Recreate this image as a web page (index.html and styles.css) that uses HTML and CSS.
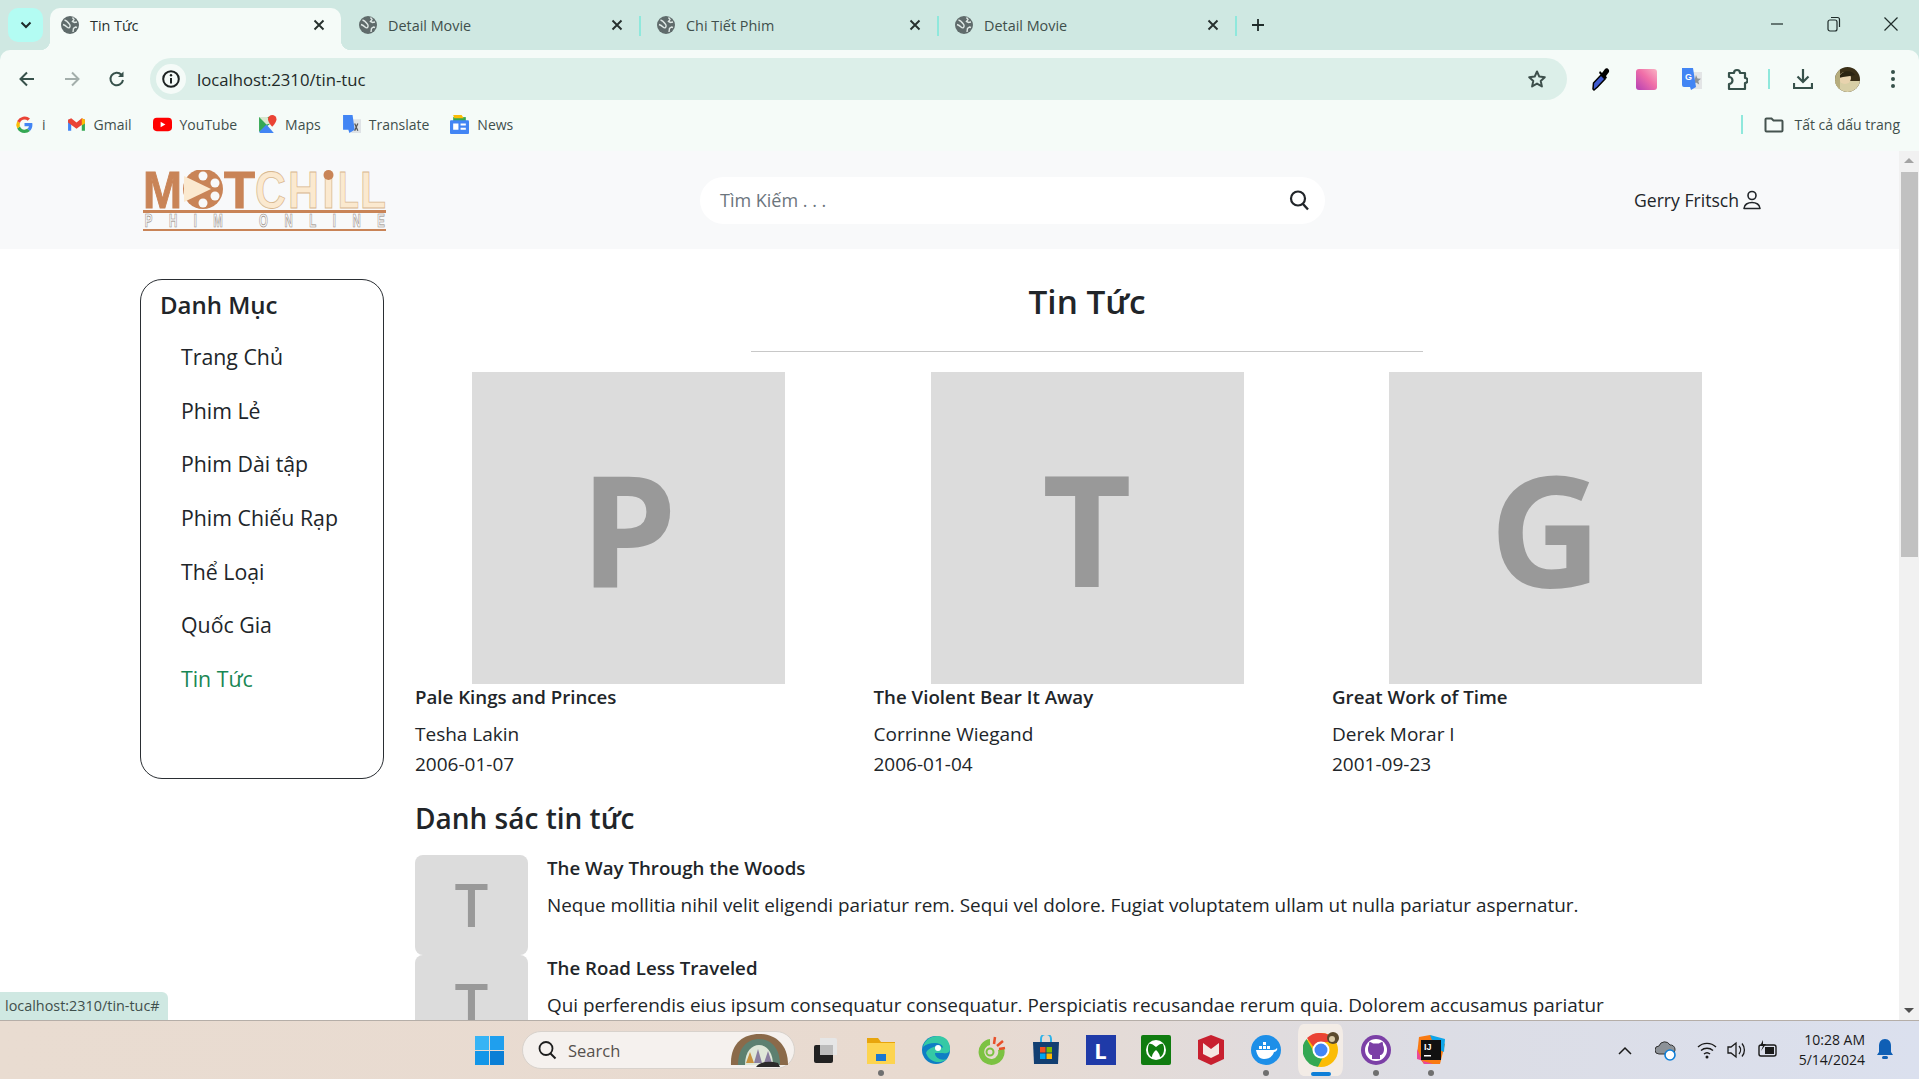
FILE: index.html
```html
<!DOCTYPE html>
<html lang="vi">
<head>
  <meta charset="UTF-8">
  <meta name="viewport" content="width=device-width, initial-scale=1.0">
  <title>Tin Tức</title>
  <link rel="stylesheet" href="styles.css">
</head>
<body>
  <svg class="defs" width="0" height="0" aria-hidden="true">
    <symbol id="globe" viewBox="0 0 18 18">
      <circle cx="9" cy="9" r="9" fill="#5f6b6b"/>
      <path d="M3.500 4c2 .5 3 1.500 4 3s2 1.500 1.500 3.500-2 1.500-3 .5-2.500-2-4-2.500M11.500 1.500l1.500 2-1.500 2 2 1 2.500-.5M12 16l.5-3.500 2-1.500 1.500.5" fill="none" stroke="#dfe8e5" stroke-width="1.400"/>
    </symbol>
    <symbol id="close-x" viewBox="0 0 12 12">
      <path d="m1.500 1.500 9 9M10.500 1.500l-9 9" stroke="#26302e" stroke-width="1.900"/>
    </symbol>
  </svg>

  <div class="tabstrip">
    <button class="tab-menu"><svg width="12" height="8" viewBox="0 0 12 8"><path d="M1.500 1.500 6 6l4.500-4.500" fill="none" stroke="#1d2a28" stroke-width="2"/></svg></button>
    <div class="tab tab-active"><svg class="favicon"><use href="#globe"/></svg><span class="tab-title">Tin Tức</span><svg class="tab-close"><use href="#close-x"/></svg></div>
    <div class="tab tab-sep"><svg class="favicon"><use href="#globe"/></svg><span class="tab-title">Detail Movie</span><svg class="tab-close"><use href="#close-x"/></svg></div>
    <div class="tab tab-sep"><svg class="favicon"><use href="#globe"/></svg><span class="tab-title">Chi Tiết Phim</span><svg class="tab-close"><use href="#close-x"/></svg></div>
    <div class="tab tab-sep"><svg class="favicon"><use href="#globe"/></svg><span class="tab-title">Detail Movie</span><svg class="tab-close"><use href="#close-x"/></svg></div>
    <svg class="tab-plus" width="14" height="14" viewBox="0 0 14 14"><path d="M7 1v12M1 7h12" stroke="#1f2c2a" stroke-width="1.800"/></svg>
    <div class="window-controls">
      <span class="win-btn"><svg width="14" height="14" viewBox="0 0 14 14"><path d="M1 7h12" stroke="#1f2c2a" stroke-width="1.200"/></svg></span>
      <span class="win-btn"><svg width="14" height="16" viewBox="0 0 14 16"><rect x="1" y="4" width="9" height="11" rx="2" fill="none" stroke="#1f2c2a" stroke-width="1.200"/><path d="M4 1.500h6.500a2 2 0 0 1 2 2V11" fill="none" stroke="#1f2c2a" stroke-width="1.200"/></svg></span>
      <span class="win-btn"><svg width="14" height="14" viewBox="0 0 14 14"><path d="M.5.500l13 13M13.500.500l-13 13" stroke="#1f2c2a" stroke-width="1.200"/></svg></span>
    </div>
  </div>

  <div class="toolbar">
    <span class="tool"><svg width="18" height="18" viewBox="0 0 18 18"><path d="M16 9H3M9 2.500 2.500 9 9 15.500" fill="none" stroke="#37514b" stroke-width="2"/></svg></span>
    <span class="tool"><svg width="18" height="18" viewBox="0 0 18 18"><path d="M2 9h13M9 2.500 15.500 9 9 15.500" fill="none" stroke="#a3aeab" stroke-width="2"/></svg></span>
    <span class="tool"><svg width="18" height="18" viewBox="0 0 18 18"><path d="M15 10a6.300 6.300 0 1 1-1.600-5.300" fill="none" stroke="#37514b" stroke-width="2"/><path d="M15.500 1.500v5.500H10z" fill="#37514b"/></svg></span>
    <div class="omnibox">
      <span class="site-info"><svg width="18" height="18" viewBox="0 0 18 18"><circle cx="9" cy="9" r="7.800" fill="none" stroke="#1d2322" stroke-width="2"/><path d="M9 8v5.500" stroke="#1d2322" stroke-width="2"/><circle cx="9" cy="5.200" r="1.200" fill="#1d2322"/></svg></span>
      <span class="url">localhost:2310/tin-tuc</span>
      <svg class="star" width="20" height="20" viewBox="0 0 20 20"><path d="m10 2.500 2.300 5.100 5.500.6-4.100 3.700 1.200 5.500L10 14.600l-4.900 2.800 1.200-5.500-4.100-3.700 5.500-.6z" fill="none" stroke="#3d4f4b" stroke-width="2" stroke-linejoin="round"/></svg>
    </div>
    <span class="tool"><svg width="20" height="24" viewBox="0 0 20 24"><path d="m2 23-1-1 .5-6L9 8l4 4-7.500 8z" fill="#3f5bd0" stroke="#000" stroke-width="1.500"/><path d="m10 6 3-4c2-2 5 1 4 3l-3 4 1 2-2 1-6-6 1-2z" fill="#000"/></svg></span>
    <span class="tool"><span class="ext-gradient"></span></span>
    <span class="tool"><svg width="22" height="24" viewBox="0 0 22 24"><path d="M9 5h12v17H12z" fill="#e3e5e6"/><path d="m15 8 1.500 3.500 3.500.3-2.700 2.200.9 3.500-3.200-2-2.500 1.500z" fill="#8d9296"/><path d="M1 1h11l3 19-5 3-1-3H3a2 2 0 0 1-2-2z" fill="#4285f4"/><text x="4" y="13" class="ext-g">G</text></svg></span>
    <span class="tool"><svg width="22" height="24" viewBox="0 0 22 24"><path d="M3 6h5a3 3 0 0 1 6 0h5v5a2.500 2.500 0 0 1 0 5v6H3v-5a3 3 0 0 0 0-7z" fill="none" stroke="#37514b" stroke-width="2.200" stroke-linejoin="round"/></svg></span>
    <span class="tool-sep"></span>
    <span class="tool"><svg width="20" height="22" viewBox="0 0 20 22"><path d="M10 1v12M4.500 8.500 10 14l5.500-5.500M1 15v5h18v-5" fill="none" stroke="#37514b" stroke-width="2.200"/></svg></span>
    <span class="tool"><svg width="25" height="25" viewBox="0 0 25 25"><defs><clipPath id="av"><circle cx="12.500" cy="12.500" r="12.500"/></clipPath></defs><g clip-path="url(#av)"><rect width="25" height="25" fill="#3b3018"/><rect y="14" width="25" height="11" fill="#d8cfa6"/><circle cx="10" cy="11" r="6" fill="#e8d3ae"/><path d="M4 11c1-8 13-9 16-3l-5 1-7 1z" fill="#2b2412"/><rect x="0" y="0" width="5" height="25" fill="#b6ad7d"/></g></svg></span>
    <span class="tool"><svg width="6" height="20" viewBox="0 0 6 20"><circle cx="3" cy="3" r="2" fill="#37514b"/><circle cx="3" cy="10" r="2" fill="#37514b"/><circle cx="3" cy="17" r="2" fill="#37514b"/></svg></span>
  </div>

  <div class="bookmarks">
    <span class="mark"><svg class="mark-icon" viewBox="0 0 18 18"><path d="M16.500 9.200c0-.6 0-1.200-.2-1.700H9v3.200h4.200a3.600 3.600 0 0 1-1.600 2.400l2.500 2c1.500-1.400 2.400-3.400 2.400-5.900z" fill="#4285f4"/><path d="M9 17c2.100 0 3.900-.7 5.100-1.900l-2.500-2c-.7.500-1.500.8-2.600.8a4.600 4.600 0 0 1-4.300-3.200L2.100 12.700A8 8 0 0 0 9 17z" fill="#34a853"/><path d="M4.700 10.700a4.700 4.700 0 0 1 0-3L2.100 5.600a8 8 0 0 0 0 7.100z" fill="#fbbc05"/><path d="M9 4.200c1.200 0 2.200.4 3 1.200l2.200-2.200A8 8 0 0 0 2.100 5.600l2.600 2A4.600 4.600 0 0 1 9 4.200z" fill="#ea4335"/></svg>i</span>
    <span class="mark"><svg class="mark-icon" viewBox="0 0 18 18"><path d="M1 4v11h3V8z" fill="#4285f4"/><path d="M17 4v11h-3V8z" fill="#34a853"/><path d="M1 4.500 4 3l5 4 5-4 3 1.500V7l-8 6-8-6z" fill="#ea4335"/><path d="M14 3l3 1.500V8l-3 2z" fill="#fbbc05"/></svg>Gmail</span>
    <span class="mark"><svg class="mark-icon" viewBox="0 0 20 18"><rect y="2" width="20" height="14" rx="4" fill="#f00"/><path d="m8 6 5 3-5 3z" fill="#fff"/></svg>YouTube</span>
    <span class="mark"><svg class="mark-icon" viewBox="0 0 18 18"><path d="M1 2h11v6L1 16z" fill="#34a853"/><path d="M1 16 8 9l7 8H2z" fill="#4285f4"/><path d="M12 8 8 9 1 2h8z" fill="#d8e8d0"/><path d="M13.500 0a4 4 0 0 1 4 4c0 3-4 7-4 7s-4-4-4-7a4 4 0 0 1 4-4z" fill="#ea4335"/></svg>Maps</span>
    <span class="mark"><svg class="mark-icon" viewBox="0 0 18 18"><path d="M6 4h12v13H9z" fill="#dfe3e6"/><path d="M1 0h9l2 14-5 3-1-3H1z" fill="#4285f4"/><path d="m12 8 3 7M15 8l-3 7" stroke="#555" stroke-width="1.200"/></svg>Translate</span>
    <span class="mark"><svg class="mark-icon" viewBox="0 0 18 18"><path d="M3 2h12v5H3z" fill="#34a853"/><path d="M3 0h8l2 3H4z" fill="#fbbc05"/><rect x="0" y="5" width="18" height="13" rx="1" fill="#4285f4"/><path d="M3 8h5v6H3zM10 8h5v2h-5zM10 12h5v2h-5z" fill="#fff"/></svg>News</span>
    <span class="marks-all"><span class="marks-sep"></span><svg width="20" height="16" viewBox="0 0 20 16"><path d="M1.500 2.500a1 1 0 0 1 1-1h5l2 2h8a1 1 0 0 1 1 1v9a1 1 0 0 1-1 1h-15a1 1 0 0 1-1-1z" fill="none" stroke="#45534f" stroke-width="2"/></svg><span>Tất cả dấu trang</span></span>
  </div>

  <div class="viewport">
    <div class="page">
      <header class="site-header">
        <svg class="logo" width="243" height="61" viewBox="0 0 243 61">
          <text class="logo-big logo-brown" x="0" y="38" textLength="39" lengthAdjust="spacingAndGlyphs">M</text>
          <circle cx="60" cy="19" r="20" fill="#c98457"/>
          <circle cx="60" cy="6" r="4.500" fill="#f8f9fa"/><circle cx="72" cy="13" r="4.500" fill="#f8f9fa"/><circle cx="72" cy="26" r="4.500" fill="#f8f9fa"/><circle cx="60" cy="33" r="4.500" fill="#f8f9fa"/>
          <path d="m41 6 27 13-27 13z" fill="#fbe9cf"/>
          <text class="logo-big logo-brown" x="81" y="38" textLength="31" lengthAdjust="spacingAndGlyphs">T</text>
          <text class="logo-big logo-cream" x="112" y="38" textLength="31" lengthAdjust="spacingAndGlyphs">C</text>
          <text class="logo-big logo-cream" x="145" y="38" textLength="31" lengthAdjust="spacingAndGlyphs">H</text>
          <text class="logo-big logo-cream" x="179" y="38" textLength="13" lengthAdjust="spacingAndGlyphs">I</text>
          <circle cx="185.500" cy="5" r="5" fill="#c98457"/>
          <text class="logo-big logo-cream" x="195" y="38" textLength="21" lengthAdjust="spacingAndGlyphs">L</text>
          <text class="logo-big logo-cream" x="217" y="38" textLength="26" lengthAdjust="spacingAndGlyphs">L</text>
          <rect y="40" width="243" height="3" fill="#c98457"/>
          <text class="logo-small" transform="scale(.6 1)" x="3" y="57.500" textLength="400">PHIM ONLINE</text>
          <rect y="59" width="243" height="2.500" fill="#c98457"/>
        </svg>
        <div class="search-box">
          <span class="search-hint">Tìm Kiếm . . .</span>
          <svg width="22" height="22" viewBox="0 0 22 22"><circle cx="10" cy="9.500" r="7" fill="none" stroke="#212529" stroke-width="2.200"/><path d="m15 15 5 5.500" stroke="#212529" stroke-width="2.400"/></svg>
        </div>
        <a class="user-link" href="#">Gerry Fritsch
          <svg width="18" height="20" viewBox="0 0 18 20"><circle cx="9" cy="5.500" r="4" fill="none" stroke="#212529" stroke-width="1.600"/><path d="M1 18.500c0-8 16-8 16 0z" fill="none" stroke="#212529" stroke-width="1.600" stroke-linejoin="round"/></svg>
        </a>
      </header>

      <div class="layout">
        <aside class="sidebar">
          <h4 class="sidebar-title">Danh Mục</h4>
          <ul class="sidebar-menu">
            <li>Trang Chủ</li>
            <li>Phim Lẻ</li>
            <li>Phim Dài tập</li>
            <li>Phim Chiếu Rạp</li>
            <li>Thể Loại</li>
            <li>Quốc Gia</li>
            <li class="active">Tin Tức</li>
          </ul>
        </aside>

        <main class="content">
          <h2 class="page-title">Tin Tức</h2>
          <hr class="page-rule">
          <div class="featured">
            <article class="card">
              <div class="card-img">P</div>
              <h6 class="card-title">Pale Kings and Princes</h6>
              <p class="card-line">Tesha Lakin</p>
              <p class="card-line">2006-01-07</p>
            </article>
            <article class="card">
              <div class="card-img">T</div>
              <h6 class="card-title">The Violent Bear It Away</h6>
              <p class="card-line">Corrinne Wiegand</p>
              <p class="card-line">2006-01-04</p>
            </article>
            <article class="card">
              <div class="card-img">G</div>
              <h6 class="card-title">Great Work of Time</h6>
              <p class="card-line">Derek Morar I</p>
              <p class="card-line">2001-09-23</p>
            </article>
          </div>

          <h3 class="list-title">Danh sác tin tức</h3>
          <div class="news-row">
            <div class="news-thumb">T</div>
            <div class="news-body">
              <h6 class="news-title">The Way Through the Woods</h6>
              <p class="news-text">Neque mollitia nihil velit eligendi pariatur rem. Sequi vel dolore. Fugiat voluptatem ullam ut nulla pariatur aspernatur.</p>
            </div>
          </div>
          <div class="news-row">
            <div class="news-thumb">T</div>
            <div class="news-body">
              <h6 class="news-title">The Road Less Traveled</h6>
              <p class="news-text">Qui perferendis eius ipsum consequatur consequatur. Perspiciatis recusandae rerum quia. Dolorem accusamus pariatur</p>
            </div>
          </div>
        </main>
      </div>
    </div>

    <div class="scrollbar">
      <span class="arrow-up"></span>
      <span class="thumb"></span>
      <span class="arrow-down"></span>
    </div>
    <div class="status-bubble">localhost:2310/tin-tuc#</div>
  </div>

  <footer class="taskbar">
    <svg class="win-logo" width="29" height="29" viewBox="0 0 29 29"><rect width="14" height="14" fill="#36b4f5"/><rect x="15" width="14" height="14" fill="#1f9fee"/><rect y="15" width="14" height="14" fill="#1296e8"/><rect x="15" y="15" width="14" height="14" fill="#0a7fd6"/></svg>
    <div class="task-search">
      <svg width="20" height="20" viewBox="0 0 20 20"><circle cx="9" cy="8.500" r="6.500" fill="none" stroke="#1d1d1d" stroke-width="1.800"/><path d="m13.500 13.500 5 5" stroke="#1d1d1d" stroke-width="2"/></svg>
      <span class="task-search-text">Search</span>
      <svg class="task-search-pic" width="62" height="34" viewBox="0 0 62 34"><path d="M3 32C2 10 16 1 31 1s29 9 29 31z" fill="#8a6a4a"/><path d="M10 32C10 14 20 6 31 6s21 8 21 26z" fill="#5d8070"/><path d="M17 32C17 18 24 12 31 12s14 6 14 20z" fill="#dfe7d8"/><path d="m26 30 4-14 4 14zM36 30l4-12 4 12z" fill="#8a7fa0"/><path d="m18 30 4-11 4 11z" fill="#c8923e"/><path d="M28 34c4-6 14-6 22-4l2 4z" fill="#2a2a2a"/></svg>
    </div>
    <span class="task-icon"><svg class="app" viewBox="0 0 30 30"><path d="M9 3h15a2 2 0 0 1 2 2v15H9z" fill="#e6e6e6"/><rect x="3" y="10" width="19" height="18" rx="2" fill="#222"/><rect x="9" y="10" width="13" height="10" fill="#bcbcbc"/></svg></span>
    <span class="task-icon running"><svg class="app" viewBox="0 0 30 30"><path d="M1 3h11l3 4h14v22H1z" fill="#e8a50c"/><path d="M1 8h28v21H1z" fill="#fdd44f"/><rect x="10" y="19" width="10" height="7" fill="#1a77d2"/></svg></span>
    <span class="task-icon"><svg class="app" viewBox="0 0 30 30"><circle cx="15" cy="15" r="14" fill="#0e7ec4"/><path d="M2 12C4 3 14-1 22 2c5 2 7 7 7 12 0 4-4 5-7 4h-8c0 5 6 8 12 6-7 6-18 3-21-6 2-5 12-9 17-5 0-6-14-7-20-1z" fill="#35c9a5"/><circle cx="17" cy="13" r="3" fill="#fff"/></svg></span>
    <span class="task-icon"><svg class="app" viewBox="0 0 30 30"><path d="M14 4a13 13 0 1 0 14 9l-6 2a7 7 0 1 1-8-5z" fill="#7cc242"/><circle cx="14" cy="17" r="3.500" fill="none" stroke="#7cc242" stroke-width="2"/><path d="m18 9 1-7M21 11l6-5M23 14l6-1" stroke="#e8502a" stroke-width="2.500"/></svg></span>
    <span class="task-icon"><svg class="app" viewBox="0 0 30 30"><path d="M10 7V4a5 5 0 0 1 10 0v3" fill="none" stroke="#2fb2e8" stroke-width="2"/><path d="M2 7h26l-1 22H3z" fill="#123f72"/><rect x="9" y="12" width="5.500" height="5.500" fill="#f25022"/><rect x="15.500" y="12" width="5.500" height="5.500" fill="#7fba00"/><rect x="9" y="18.500" width="5.500" height="5.500" fill="#00a4ef"/><rect x="15.500" y="18.500" width="5.500" height="5.500" fill="#ffb900"/></svg></span>
    <span class="task-icon"><span class="app-l">L</span></span>
    <span class="task-icon"><svg class="app" viewBox="0 0 30 30"><rect width="30" height="30" rx="2" fill="#107c10"/><circle cx="15" cy="15" r="10" fill="#fff"/><path d="M15 12c-3-3-6-4-7-3-3 7 1 13 3 13 0-3 3-6 4-7 1 1 4 4 4 7 2 0 6-6 3-13-1-1-4 0-7 3z" fill="#107c10"/></svg></span>
    <span class="task-icon"><svg class="app" viewBox="0 0 30 30"><path d="M15 30 2 24V5l13-5 13 5v19z" fill="#c8202f"/><path d="m15 23-8-4V8l8 6 8-6v11z" fill="#f4e7e2"/></svg></span>
    <span class="task-icon running"><svg class="app" viewBox="0 0 30 30"><circle cx="15" cy="15" r="15" fill="#1d8fe8"/><path d="M5 15h17c2 0 3-1 4-2 1 2-1 4-3 4-1 4-5 7-10 7-5 0-7-4-8-9z" fill="#fff"/><path d="M8 11h3v3H8zM12 11h3v3h-3zM16 11h3v3h-3zM12 7h3v3h-3z" fill="#fff"/></svg></span>
    <span class="task-icon task-active"><svg class="app chrome" viewBox="0 0 36 36"><circle cx="18" cy="18" r="17" fill="#fbbc05"/><path d="M18 1a17 17 0 0 1 15 9H18a8 8 0 0 0-7.500 5L4 6a17 17 0 0 1 14-5z" fill="#ea4335"/><path d="M3.500 7 11 20a8 8 0 0 0 9 5l-5 9.800A17 17 0 0 1 3.500 7z" fill="#34a853"/><circle cx="18" cy="18" r="8.500" fill="#fff"/><circle cx="18" cy="18" r="6.500" fill="#4285f4"/><circle cx="30" cy="6" r="6" fill="#5b4a2e"/><circle cx="29" cy="7" r="3" fill="#d9c9a5"/></svg></span>
    <span class="task-icon running"><svg class="app" viewBox="0 0 30 30"><circle cx="15" cy="15" r="15" fill="#7b3fa6"/><circle cx="15" cy="15" r="11" fill="#fff"/><path d="M11 24v-4c-2 0-4-2-4-6 0-2 .5-3 1-4 0-1 0-2 .5-3 1 0 2 .5 3.500 1.500h6C19.500 7.500 20.500 7 21.500 7c.5 1 .5 2 .5 3 .5 1 1 2 1 4 0 4-2 6-4 6v4z" fill="#7b3fa6"/></svg></span>
    <span class="task-icon running"><svg class="app" viewBox="0 0 30 30"><path d="M3 2 14 0l15 9-5 20H8L1 20z" fill="#f97a12"/><path d="M14 0l15 4-1 13-9-4z" fill="#0ea5e9"/><path d="M1 14 8 29h9L1 24z" fill="#ec4899"/><rect x="5" y="5" width="20" height="20" fill="#111"/><text x="8" y="15" class="ij-text">IJ</text><rect x="8" y="20" width="7" height="1.500" fill="#fff"/></svg></span>

    <div class="tray">
      <svg class="tray-chevron" width="14" height="9" viewBox="0 0 14 9"><path d="m1 8 6-6 6 6" fill="none" stroke="#1a1a1a" stroke-width="1.500"/></svg>
      <svg class="tray-cloud" width="22" height="22" viewBox="0 0 22 22"><path d="M4 15a4 4 0 0 1 0-8 6 6 0 0 1 11-1 4.500 4.500 0 0 1 1 9z" fill="#8d9298" stroke="#333"/><circle cx="15" cy="16" r="5" fill="#fff" stroke="#0f7fd8" stroke-width="1.600"/></svg>
      <svg class="tray-wifi" width="20" height="18" viewBox="0 0 20 18"><path d="M1 6a13 13 0 0 1 18 0M4 9.500a9 9 0 0 1 12 0M7 13a4.500 4.500 0 0 1 6 0" fill="none" stroke="#1a1a1a" stroke-width="1.400"/><circle cx="10" cy="16" r="1.500" fill="#1a1a1a"/></svg>
      <svg class="tray-vol" width="20" height="20" viewBox="0 0 20 20"><path d="M1 7h3l5-4v14l-5-4H1z" fill="none" stroke="#1a1a1a" stroke-width="1.300"/><path d="M12 6a6 6 0 0 1 0 8M15 3.500a10 10 0 0 1 0 13" fill="none" stroke="#1a1a1a" stroke-width="1.300"/></svg>
      <svg class="tray-bat" width="22" height="20" viewBox="0 0 22 20"><rect x="2" y="5" width="17" height="11" rx="2" fill="none" stroke="#1a1a1a" stroke-width="1.400"/><rect x="8" y="7" width="9" height="7" fill="#1a1a1a"/><path d="M6 0 3 6h3l-2 5 5-7H6z" fill="#1a1a1a"/></svg>
      <div class="clock"><span>10:28 AM</span><span>5/14/2024</span></div>
      <svg class="tray-bell" width="18" height="24" viewBox="0 0 18 24"><path d="M9 1c4 0 6 3 6 7v6l2 3H1l2-3V8c0-4 2-7 6-7z" fill="#0f5fb5"/><rect x="6" y="18" width="6" height="3" rx="1.500" fill="#0f5fb5"/></svg>
    </div>
  </footer>
</body>
</html>
```

FILE: styles.css
```css
* {
  margin: 0;
  padding: 0;
  box-sizing: border-box;
}

html,
body {
  height: 100%;
  overflow: hidden;
}

body {
  display: flex;
  flex-direction: column;
  font-family: "Open Sans", "Noto Sans", sans-serif;
  color: #212529;
  background: #cfe8e2;
}

.defs {
  position: absolute;
}

/* browser tabs */
.tabstrip {
  display: flex;
  align-items: flex-end;
  height: 50px;
  padding-left: 8px;
  background: #cfe8e2;
}

.tab-menu {
  align-self: flex-start;
  display: flex;
  align-items: center;
  justify-content: center;
  width: 35px;
  height: 34px;
  margin-top: 8px;
  margin-right: 7px;
  border: none;
  border-radius: 10px;
  background: #b3fcf3;
}

.tab {
  position: relative;
  display: flex;
  align-items: center;
  gap: 11px;
  width: 298px;
  height: 42px;
  padding: 0 23px 8px 11px;
  font-size: 14.400px;
  color: #3f4f4c;
}

.tab-active {
  width: 291px;
  margin-right: 7px;
  padding-right: 16px;
  border-radius: 10px 10px 0 0;
  background: #f5fbf8;
  color: #26302e;
}

.tab-active::before,
.tab-active::after {
  content: "";
  position: absolute;
  bottom: 0;
  width: 10px;
  height: 10px;
}

.tab-active::before {
  left: -10px;
  background: radial-gradient(circle at 0 0, #cfe8e2 10px, #f5fbf8 10.500px);
}

.tab-active::after {
  right: -10px;
  background: radial-gradient(circle at 100% 0, #cfe8e2 10px, #f5fbf8 10.500px);
}

.tab-sep::after {
  content: "";
  position: absolute;
  right: 5px;
  top: 8px;
  width: 2px;
  height: 20px;
  background: #8fe8dc;
}

.favicon {
  flex: none;
  width: 18px;
  height: 18px;
}

.tab-title {
  flex: 1;
}

.tab-close {
  flex: none;
  width: 12px;
  height: 12px;
}

.tab-plus {
  align-self: center;
  margin-left: 9px;
}

.window-controls {
  display: flex;
  align-self: flex-start;
  margin-left: auto;
}

.win-btn {
  display: flex;
  align-items: center;
  justify-content: center;
  width: 57px;
  height: 48px;
}

/* address bar */
.toolbar {
  display: flex;
  align-items: center;
  height: 50px;
  padding: 8px 4px 0;
  border-radius: 10px 10px 0 0;
  background: #f5fbf8;
}

.tool {
  display: flex;
  flex: none;
  align-items: center;
  justify-content: center;
  width: 45px;
  height: 40px;
}

.omnibox {
  display: flex;
  flex: 1;
  align-items: center;
  height: 42px;
  margin: 0 12px 0 11px;
  padding: 0 20px 0 6px;
  border-radius: 21px;
  background: #dcefe9;
}

.site-info {
  display: flex;
  align-items: center;
  justify-content: center;
  width: 30px;
  height: 30px;
  border-radius: 50%;
  background: #f5fbf8;
}

.url {
  flex: 1;
  margin-left: 11px;
  font-size: 16.700px;
  color: #1f2a28;
}

.tool-sep {
  flex: none;
  width: 2px;
  height: 20px;
  margin: 0 10px 0 9px;
  background: #8fe8dc;
}

.ext-gradient {
  width: 21px;
  height: 21px;
  border-radius: 3px;
  background: linear-gradient(45deg, #b53fb5, #f06fa8 55%, #f9b4c4);
}

.ext-g {
  font: bold 9px "Liberation Sans", sans-serif;
  fill: #fff;
}

/* bookmarks */
.bookmarks {
  display: flex;
  align-items: center;
  height: 51px;
  padding: 0 19px 2px 15px;
  background: #f5fbf8;
  font-size: 14px;
  color: #3f4f4c;
}

.mark {
  display: flex;
  align-items: center;
  gap: 8px;
  margin-right: 21px;
}

.mark-icon {
  width: 19px;
  height: 19px;
}

.marks-all {
  display: flex;
  align-items: center;
  margin-left: auto;
}

.marks-all span:last-child {
  margin-left: 11px;
}

.marks-sep {
  width: 2px;
  height: 19px;
  margin-right: 21px;
  background: #8fe8dc;
}

/* page area */
.viewport {
  position: relative;
  display: flex;
  flex: 1;
  min-height: 0;
  background: #fff;
}

.page {
  flex: 1;
  overflow: hidden;
}

.site-header {
  display: flex;
  align-items: center;
  height: 98px;
  padding-left: 143px;
  background: #f8f9fa;
}

.logo {
  flex: none;
}

.logo-big {
  font: bold 52px "Liberation Sans", sans-serif;
}

.logo-brown {
  fill: #c98457;
  stroke: #c98457;
  stroke-width: 1px;
}

.logo-cream {
  fill: #fbe9cf;
  stroke: #d8b88f;
  stroke-width: 0.800px;
}

.logo-small {
  font: bold 19px "Liberation Sans", sans-serif;
  fill: #f8f9fa;
  stroke: #8f857a;
  stroke-width: 0.700px;
}

.search-box {
  display: flex;
  align-items: center;
  justify-content: space-between;
  width: 625px;
  height: 47px;
  margin-left: 314px;
  padding: 0 15px 0 20px;
  border-radius: 24px;
  background: #fff;
}

.search-hint {
  font-size: 18px;
  color: #6c757d;
}

.user-link {
  display: flex;
  align-items: center;
  gap: 4px;
  margin-left: 309px;
  font-size: 17.600px;
  color: #212529;
  text-decoration: none;
}

.layout {
  display: flex;
  align-items: flex-start;
  padding: 30px 0 0 140px;
}

.sidebar {
  flex: none;
  width: 244px;
  height: 500px;
  padding: 5px 19px;
  border: 1px solid #2a2e33;
  border-radius: 22px;
}

.sidebar-title {
  font-size: 24px;
  font-weight: 600;
  line-height: 40px;
}

.sidebar-menu {
  list-style: none;
  padding-left: 21px;
  margin-top: 5px;
}

.sidebar-menu li {
  height: 53.700px;
  font-size: 21.300px;
  line-height: 53.700px;
}

.sidebar-menu .active {
  color: #198754;
}

.content {
  flex: none;
  width: 1344px;
  margin-left: 31px;
}

.page-title {
  font-size: 33.300px;
  font-weight: 600;
  line-height: 44px;
  text-align: center;
}

.page-rule {
  width: 672px;
  margin: 28px auto 20px;
  border: none;
  border-top: 1px solid #c8c8c8;
}

.featured {
  display: grid;
  grid-template-columns: repeat(3, 427px);
  column-gap: 31.500px;
}

.card-img {
  display: flex;
  align-items: center;
  justify-content: center;
  width: 313px;
  height: 312px;
  margin: 0 auto;
  padding-bottom: 4px;
  background: #dcdcdc;
  color: #999;
  font-size: 155px;
  font-weight: 700;
  line-height: 1;
}

.card-title {
  font-size: 18.700px;
  font-weight: 600;
  line-height: 26px;
}

.card-line {
  font-size: 19px;
  line-height: 30px;
}

.card-title + .card-line {
  margin-top: 9px;
}

.list-title {
  margin-top: 19px;
  font-size: 28px;
  font-weight: 600;
  line-height: 40px;
}

.list-title + .news-row {
  margin-top: 17px;
}

.news-row {
  display: flex;
  height: 100px;
}

.news-thumb {
  display: flex;
  flex: none;
  align-items: center;
  justify-content: center;
  width: 113px;
  height: 100px;
  margin-right: 19px;
  padding-bottom: 2px;
  border-radius: 8px;
  background: #dcdcdc;
  color: #999;
  font-size: 60px;
  font-weight: 600;
  line-height: 1;
}

.news-body {
  max-width: 1130px;
}

.news-title {
  font-size: 18.700px;
  font-weight: 600;
  line-height: 26px;
}

.news-text {
  margin-top: 11px;
  font-size: 18.900px;
  line-height: 26px;
}

.scrollbar {
  position: relative;
  flex: none;
  width: 20px;
  background: #f1f1f1;
}

.thumb {
  position: absolute;
  top: 21px;
  left: 2px;
  width: 17px;
  height: 385px;
  background: #c1c1c1;
}

.arrow-up,
.arrow-down {
  position: absolute;
  left: 5px;
  border-left: 5px solid transparent;
  border-right: 5px solid transparent;
}

.arrow-up {
  top: 7px;
  border-bottom: 5px solid #a3a3a3;
}

.arrow-down {
  bottom: 7px;
  border-top: 5px solid #505050;
}

.status-bubble {
  position: absolute;
  left: 0;
  bottom: 0;
  width: 168px;
  height: 28px;
  padding-left: 5px;
  border-radius: 0 6px 0 0;
  background: #cfe8e2;
  font-size: 14.400px;
  line-height: 28px;
  color: #3f4f4c;
}

/* windows taskbar */
.taskbar {
  display: flex;
  flex: none;
  align-items: center;
  height: 59px;
  padding-left: 475px;
  border-top: 1px solid #b5aea8;
  background: linear-gradient(90deg, #e9dcd1 0%, #e8dad0 50%, #dcdde5 75%, #dbe0ee 100%);
}

.win-logo {
  flex: none;
}

.task-search {
  display: flex;
  flex: none;
  align-items: center;
  width: 273px;
  height: 38px;
  margin: 0 3px 0 18px;
  padding-left: 14px;
  border: 1px solid #d8d2cc;
  border-radius: 19px;
  background: #f5f1ee;
}

.task-search-text {
  margin-left: 11px;
  font-size: 16.500px;
  color: #55504c;
}

.task-search-pic {
  margin-left: auto;
  margin-right: 4px;
}

.task-icon {
  position: relative;
  display: flex;
  flex: none;
  align-items: center;
  justify-content: center;
  width: 55px;
  height: 52px;
}

.app {
  width: 30px;
  height: 30px;
}

.chrome {
  width: 36px;
  height: 36px;
}

.app-l {
  display: flex;
  align-items: center;
  justify-content: center;
  width: 30px;
  height: 30px;
  background: #1f3aa8;
  color: #fff;
  font-size: 22px;
  font-weight: 700;
}

.ij-text {
  font: bold 9px "Liberation Sans", sans-serif;
  fill: #fff;
}

.running::after,
.task-active::after {
  content: "";
  position: absolute;
  bottom: 0;
  left: 50%;
  width: 6px;
  height: 6px;
  margin-left: -3px;
  border-radius: 50%;
  background: #6f6f6f;
}

.task-active {
  border-left: 5px solid transparent;
  border-right: 5px solid transparent;
  border-radius: 10px;
  background: #f3ece6 padding-box;
}

.task-active::after {
  width: 20px;
  height: 4px;
  margin-left: -10px;
  border-radius: 2px;
  background: #0f7fd8;
}

.tray {
  display: flex;
  flex: none;
  align-items: center;
  margin-left: auto;
  padding-right: 25px;
}

.tray-cloud {
  margin-left: 23px;
}

.tray-wifi {
  margin-left: 20px;
}

.tray-vol {
  margin-left: 10px;
}

.tray-bat {
  margin-left: 10px;
}

.clock {
  display: flex;
  flex-direction: column;
  align-items: flex-end;
  margin-left: 20px;
  font-size: 14px;
  line-height: 20px;
  color: #1a1a1a;
}

.tray-bell {
  margin-left: 11px;
}
```
